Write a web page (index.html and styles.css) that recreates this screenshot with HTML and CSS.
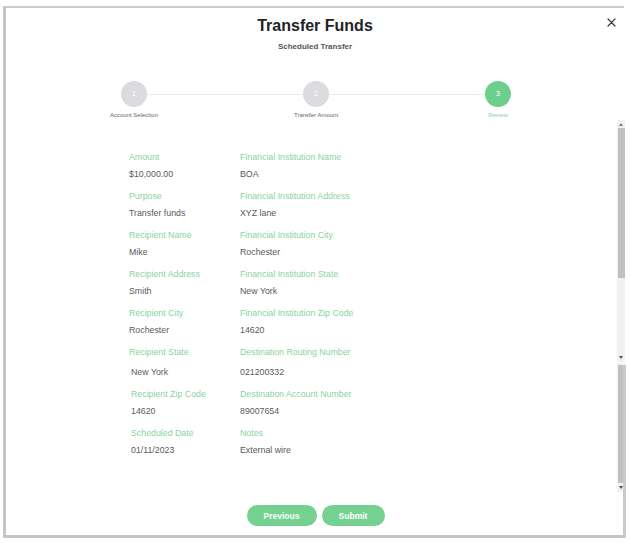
FILE: index.html
```html
<!DOCTYPE html>
<html lang="en">
<head>
<meta charset="utf-8">
<title>Transfer Funds</title>
<link rel="stylesheet" href="styles.css">
</head>
<body>
<div class="frame">
  <button class="close" aria-label="Close">
    <svg width="9" height="9" viewBox="0 0 9 9"><path d="M1 1L8 8M8 1L1 8" stroke="#3a3a3e" stroke-width="1.2" stroke-linecap="round"/></svg>
  </button>
  <header class="header">
    <h1 class="title">Transfer Funds</h1>
    <p class="subtitle">Scheduled Transfer</p>
  </header>

  <div class="stepper">
    <div class="step">
      <div class="circle">1</div>
      <div class="step-label">Account Selection</div>
    </div>
    <div class="line"></div>
    <div class="step">
      <div class="circle">2</div>
      <div class="step-label">Transfer Amount</div>
    </div>
    <div class="line"></div>
    <div class="step step--active">
      <div class="circle">3</div>
      <div class="step-label">Review</div>
    </div>
  </div>

  <div class="fields">
    <div class="field"><div class="label">Amount</div><div class="value">$10,000.00</div></div>
    <div class="field"><div class="label">Financial Institution Name</div><div class="value">BOA</div></div>
    <div class="field"><div class="label">Purpose</div><div class="value">Transfer funds</div></div>
    <div class="field"><div class="label">Financial Institution Address</div><div class="value">XYZ lane</div></div>
    <div class="field"><div class="label">Recipient Name</div><div class="value">Mike</div></div>
    <div class="field"><div class="label">Financial Institution City</div><div class="value">Rochester</div></div>
    <div class="field"><div class="label">Recipient Address</div><div class="value">Smith</div></div>
    <div class="field"><div class="label">Financial Institution State</div><div class="value">New York</div></div>
    <div class="field"><div class="label">Recipient City</div><div class="value">Rochester</div></div>
    <div class="field"><div class="label">Financial Institution Zip Code</div><div class="value">14620</div></div>
    <div class="field"><div class="label">Recipient State</div><div class="value value--gap value--shift">New York</div></div>
    <div class="field"><div class="label">Destination Routing Number</div><div class="value value--gap">021200332</div></div>
    <div class="field field--shift"><div class="label">Recipient Zip Code</div><div class="value">14620</div></div>
    <div class="field"><div class="label">Destination Account Number</div><div class="value">89007654</div></div>
    <div class="field field--shift"><div class="label">Scheduled Date</div><div class="value">01/11/2023</div></div>
    <div class="field"><div class="label">Notes</div><div class="value">External wire</div></div>
  </div>

  <div class="actions">
    <button class="btn btn--prev">Previous</button>
    <button class="btn btn--submit">Submit</button>
  </div>

  <div class="scrollbar scrollbar--top">
    <span class="arrow arrow--up"></span>
    <span class="thumb"></span>
    <span class="arrow arrow--down arrow--end"></span>
  </div>
  <div class="scrollbar scrollbar--bottom">
    <span class="thumb"></span>
    <span class="arrow arrow--down"></span>
  </div>
  <div class="edge-right"></div>
</div>
</body>
</html>
```

FILE: styles.css
```css
* { box-sizing: border-box; }

html, body {
  margin: 0;
  padding: 0;
  background: #ffffff;
  font-family: "Liberation Sans", Arial, sans-serif;
}

.frame {
  position: relative;
  margin: 6px 6px 0 3px;
  height: 532px;
  border-top: 2px solid #cacace;
  border-left: 3px solid #c4c4c9;
  border-bottom: 3px solid #c4c4c9;
  display: flex;
  flex-direction: column;
}

.close {
  position: absolute;
  top: 9px;
  left: 600px;
  width: 11px;
  height: 11px;
  padding: 1px;
  border: 0;
  background: transparent;
  display: flex;
}

.header {
  padding-top: 8px;
  text-align: center;
}

.title {
  margin: 0;
  font-size: 16px;
  line-height: 20px;
  font-weight: 700;
  color: #222227;
}

.subtitle {
  margin: 6px 0 0;
  font-size: 8px;
  line-height: 10px;
  font-weight: 700;
  color: #55555a;
}

.stepper {
  margin: 29px 0 0 115px;
  width: 390px;
  display: flex;
  align-items: flex-start;
}

.step {
  width: 26px;
  display: flex;
  flex-direction: column;
  align-items: center;
}

.circle {
  width: 26px;
  height: 26px;
  border-radius: 50%;
  background: #dcdce0;
  color: #ffffff;
  font-size: 7px;
  line-height: 26px;
  text-align: center;
}

.step--active .circle { background: #6ccf8b; }

.step-label {
  margin-top: 4px;
  font-size: 6px;
  line-height: 8px;
  color: #66666a;
  white-space: nowrap;
}

.step--active .step-label { color: #80d29c; }

.line {
  flex: 1;
  height: 1px;
  margin-top: 13px;
  background: #ebebee;
}

.fields {
  margin-top: 32px;
  padding-left: 123px;
  display: grid;
  grid-template-columns: 111px auto;
  row-gap: 10px;
}

.label {
  font-size: 8.8px;
  line-height: 12px;
  color: #86d4a1;
  white-space: nowrap;
}

.value {
  margin-top: 5px;
  font-size: 8.8px;
  line-height: 12px;
  color: #5a5a5e;
  white-space: nowrap;
}

.value--gap { margin-top: 8px; }
.value--shift { padding-left: 2px; }
.field--shift { padding-left: 2px; }

.actions {
  margin-top: auto;
  margin-bottom: 9px;
  display: flex;
  justify-content: center;
  gap: 5px;
  padding-left: 1px;
}

.btn {
  height: 21px;
  padding: 0;
  border: 0;
  border-radius: 11px;
  background: #74d190;
  color: #ffffff;
  font-family: "Liberation Sans", Arial, sans-serif;
  font-size: 8.5px;
  font-weight: 700;
}

.btn--prev { width: 70px; }
.btn--submit { width: 63px; }

.scrollbar {
  position: absolute;
  left: 611px;
  width: 8px;
  background: #f1f1f1;
  display: flex;
  flex-direction: column;
  align-items: center;
}

.scrollbar--top { top: 112px; height: 242px; }
.scrollbar--bottom { top: 355px; height: 129px; }

.thumb {
  width: 7px;
  background: #c1c1c1;
}

.scrollbar--top .thumb { margin-top: 2px; height: 150px; }
.scrollbar--bottom .thumb { margin-top: 2px; height: 118px; }

.arrow {
  width: 0;
  height: 0;
  border-left: 2.5px solid transparent;
  border-right: 2.5px solid transparent;
}

.arrow--up { margin-top: 3px; border-bottom: 3px solid #7a7a7a; }
.arrow--down { margin-top: 3px; border-top: 3px solid #505050; }
.arrow--end { margin-top: auto; margin-bottom: 3px; }

.edge-right {
  position: absolute;
  top: 357px;
  left: 617px;
  width: 3px;
  bottom: -3px;
  background: #c9c9cd;
}
```
